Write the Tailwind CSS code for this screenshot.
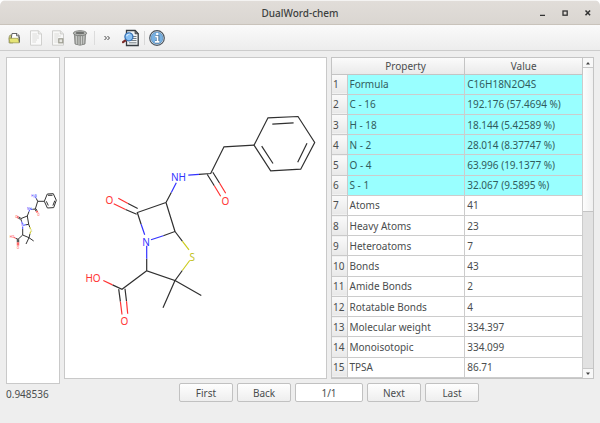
<!DOCTYPE html>
<html lang="en">
<head>
<meta charset="utf-8">
<title>DualWord-chem</title>
<script src="https://cdn.jsdelivr.net/npm/@tailwindcss/browser@4"></script>
</head>
<body class="bg-white">
<div class="flex h-screen flex-col overflow-hidden rounded-t-md bg-[#eeeeee] font-['Noto_Sans',sans-serif] text-[10px] leading-4 text-[#4a4d4e]">
  <header class="grid h-[25px] shrink-0 grid-cols-[1fr_auto_1fr] items-center border-t border-b border-t-[#f4f3f2] border-b-[#c9c3bb] bg-linear-to-b from-[#e1ddd9] to-[#dad6d1] px-1">
    <h1 class="col-start-2 font-medium text-[#3c3f40]">DualWord-chem</h1>
    <div class="flex justify-end gap-[7px]">
      <button aria-label="Minimize" class="size-4"><svg viewBox="0 0 16 16" class="size-4"><path d="M6 10.3h5" stroke="#333" stroke-width="1.3"/></svg></button>
      <button aria-label="Maximize" class="size-4"><svg viewBox="0 0 16 16" class="size-4"><rect x="6" y="6" width="4.2" height="4.2" fill="none" stroke="#333" stroke-width="1.3"/></svg></button>
      <button aria-label="Close" class="size-4"><svg viewBox="0 0 16 16" class="size-4"><path d="M5.5 5.5l4.6 4.8M10.1 5.5L5.5 10.3" stroke="#333" stroke-width="1.5"/></svg></button>
    </div>
  </header>

  <nav aria-label="Toolbar" class="flex h-[26px] shrink-0 items-center border-b border-[#cccccc] bg-linear-to-b from-[#fafafa] to-[#ededed] px-[3px]">
    <button aria-label="Open" class="flex w-[22px] justify-center">
      <svg viewBox="0 0 16 16" class="size-4"><path d="M3 7l1-2h3v8H3z" fill="#c8c878" stroke="#85855a" stroke-width=".6"/><path d="M6 3.5h5l2 2V10H5z" fill="#fff" stroke="#555" stroke-width=".9"/><path d="M10.5 3.5v2.3H13" fill="#ccc" stroke="#444" stroke-width=".7"/><path d="M3 8.3h9l1.2 4.5H4z" fill="#e5e477" stroke="#96954b" stroke-width=".7"/><path d="M12.3 7h1.2v5.5" fill="none" stroke="#666" stroke-width="1"/></svg>
    </button>
    <button aria-label="New document" class="flex w-[22px] justify-center">
      <svg viewBox="0 0 16 16" class="size-4"><path d="M2.5.8h8L13.5 4v11.2h-11z" fill="#fafafa" stroke="#ccccca" stroke-width=".9"/><path d="M10.3.8V4h3.2" fill="#e9e9e7" stroke="#c8c8c6" stroke-width=".7"/><path d="M4.3 4H9M4.3 6h6.5M4.3 8H11M4.3 10H9M4.3 12H8" stroke="#d4d4d2" stroke-width=".8"/></svg>
    </button>
    <button aria-label="Save document" class="flex w-[22px] justify-center">
      <svg viewBox="0 0 16 16" class="size-4"><path d="M2.5.8h8L13.5 4v11.2h-11z" fill="#f8f8f7" stroke="#c9c9c7" stroke-width=".9"/><path d="M10.3.8V4h3.2" fill="#e6e6e4" stroke="#c5c5c3" stroke-width=".7"/><path d="M4.3 4H9M4.3 6h6.5M4.3 8H8M4.3 10H8M4.3 12H8" stroke="#d4d4d2" stroke-width=".8"/><rect x="8.8" y="8.8" width="4" height="4" fill="#e8e8e3" stroke="#9b9b8f" stroke-width="1.2"/></svg>
    </button>
    <button aria-label="Delete" class="flex w-[22px] justify-center">
      <svg viewBox="0 0 16 16" class="size-4"><path d="M2.3 3.5h11.4L13 14q-5 2.4-10 0z" fill="#a6a8a5" stroke="#7c7e7b" stroke-width=".8"/><path d="M4.4 5.5l.4 8.5M7 6v8.8M9.5 6v8.5M11.8 5.5l-.5 8.3" stroke="#cfd1ce" stroke-width=".9"/><path d="M5.7 6v8M8.2 6v8.6M10.7 6v8" stroke="#858784" stroke-width=".7"/><ellipse cx="8" cy="3.2" rx="6.6" ry="2.5" fill="#b9bbb8" stroke="#777976" stroke-width=".9"/><ellipse cx="8" cy="3" rx="4.4" ry="1.2" fill="#6f716e"/></svg>
    </button>
    <span class="mx-[3px] h-3.5 w-px bg-[#dcdcdc]"></span>
    <button aria-label="More tools" class="flex w-[18px] justify-center">
      <svg viewBox="0 0 16 16" class="size-4"><path d="M5.5 6l2 2-2 2M8.5 6l2 2-2 2" fill="none" stroke="#444" stroke-width="1"/></svg>
    </button>
    <button aria-label="Find in document" class="ml-[3px] flex w-6 justify-center">
      <svg viewBox="0 0 18 18" class="size-[18px]"><path d="M4.5 1.5h8.7l3 3.2v11.8H4.5z" fill="#f1f4f6" stroke="#363c42" stroke-width="1.3"/><path d="M13 1.5v3.3h3.2z" fill="#78818a" stroke="#333" stroke-width=".7"/><path d="M10.5 7.5h4M10 9.5h4.5M8 11.5h6.5M7 13.8h7.5" stroke="#777f85" stroke-width="1"/><path d="M1 13.2l3-2.2" stroke="#7b2a29" stroke-width="2.2" stroke-linecap="round"/><circle cx="6.9" cy="7.8" r="4" fill="#89c1f4" stroke="#3973b4" stroke-width="1.3"/><path d="M4.5 7.3q.8-2.3 3.2-2.3" fill="none" stroke="#d9edff" stroke-width="1.1"/></svg>
    </button>
    <span class="mr-1 ml-px h-3.5 w-px bg-[#d8d8d8]"></span>
    <button aria-label="About" class="flex w-4 justify-center">
      <svg viewBox="0 0 16 16" class="size-4"><circle cx="8" cy="8" r="7.3" fill="#e8eef2" stroke="#4a535c" stroke-width="1.2"/><circle cx="8" cy="8" r="5.9" fill="#78b1e2" stroke="#5288ba" stroke-width=".7"/><path d="M6.2 6.6H9v5.2M6 11.9h4.4" fill="none" stroke="#45698b" stroke-width="2.7"/><path d="M6.2 6.6H8.6v5.2M6 11.9h4.4" fill="none" stroke="#fff" stroke-width="1.6"/><circle cx="8.2" cy="3.9" r="1.2" fill="#fff"/></svg>
    </button>
  </nav>

  <main class="flex min-h-0 flex-1 gap-1 px-1.5 pt-1.5 pb-[21px]">
    <aside class="flex w-[54px] shrink-0 flex-col">
      <div class="min-h-0 flex-1 border border-[#c9c9c9] bg-white">
        <svg viewBox="7 58 52 325" class="size-full" role="img" aria-label="Molecule thumbnail">
          <g fill="none" stroke="#333" stroke-width="1">
            <path d="M44.3 201.3l3-7.3 6-.3 3 6.6-2.6 7.3-6.3.4z"/><path d="M46.3 201.3l2 4.2M48 195.3h4.5M54.8 200.6l-1.9 5"/>
            <path d="M44.3 201.3h-6.6l-2.4 7.7-3 .3M37.7 201.3l-1.5-3M29 211.5l-1.7 4.5-6.6 2.7 1 3M27.3 216l1.4 8.3-2.7.5M28.7 224.3l1.1 3M22.7 229v6l6.3 2.7 1-4M29 237.7l-3 6.3M29 237.7l4.7 3.3M22.7 235L18 239.3l-2.3-1M17.3 239.3v3M18.7 239.3v3M35 209.2l1 2M36 208.8l1 2M20.7 218l-2-1M20.3 219.2l-2-1"/>
          </g>
          <g fill="none" stroke-width="1">
            <path d="M36.2 198.3l-1-1.7M32.3 209.3h-1.8M29 211.5l.5-1.5M21.7 221.7l.7 2M23.5 225.3l2.5-.6M22.7 226.5V229" stroke="#4545ff"/>
            <path d="M36 211.2l1 1.6M37 210.8l1 1.6M18.7 217l-1.4-.7M18.3 218.2l-1.4-.7M15.7 238.3l-2-1M17.3 242.3v3.3M18.7 242.3v3.3" stroke="#ff4545"/>
            <path d="M29.8 227.3l.7 1.6M30 233.7l.6-2" stroke="#cccc33" stroke-width="1.2"/>
          </g>
          <g font-size="3" text-anchor="middle"><text x="34" y="196.5" fill="#33f">H₂N</text><text x="29.3" y="210" fill="#33f">NH</text><text x="22.5" y="226.3" fill="#33f">N</text><text x="31.3" y="231.5" fill="#bb0">S</text><text x="16.5" y="217.5" fill="#f33">O</text><text x="38.3" y="215.5" fill="#f33">O</text><text x="12" y="238" fill="#f33">HO</text><text x="18" y="249" fill="#f33">O</text></g>
        </svg>
      </div>
      <output class="mt-0.5 block">0.948536</output>
    </aside>

    <div class="flex min-w-0 flex-1 flex-col gap-1">
      <div class="flex min-h-0 flex-1 gap-1">
        <div class="min-w-0 flex-1 border border-[#c9c9c9] bg-white">
          <svg viewBox="65 58 261 319" class="size-full" role="img" aria-label="Molecule structure">
            <g fill="none" stroke="#303030" stroke-width="1.2">
              <path d="M254 144.7l14-27.4 30-1.3 16.7 26-14 26.7-30 1.6z"/>
              <path d="M272.3 123.7l21.3-1.4M307 142.7l-9.3 19M261.7 145.7l11.3 17.3"/>
              <path d="M254 144.7l-30 1.6-13.3 26.7-11.7.8M207.3 174l7 11.2M212.8 171.7l6.7 10.8"/>
              <path d="M171.3 192l-5.3 10 9 29-11.7 4.3M166 202l-28.7 10 3.8 11.7M175 231l7.3 9.7M146.7 258.3v12l28.3 9.7 7.3-10M175 280l-12 27.3M175 280l26.3 15M146.7 270.3L122 288.7l-9.5-4.3"/>
              <path d="M128 203l9.7 5M125.5 209l11.2 4.8M118.7 288.7l1.7 12.5M125 288.3l1.5 12.5"/>
            </g>
            <g fill="none" stroke="#3333ff" stroke-width="1.2"><path d="M188.3 174.7l10.7-.9M171.3 192l5-9.7M141.1 223.7l3.6 10.6M163.3 235.3l-12.3 4M146.7 258.3v-13"/></g>
            <g fill="none" stroke="#ff3333" stroke-width="1.2"><path d="M214.3 185.2l6.4 10.5M219.5 182.5l6.2 10.2M128 203l-9.7-5.3M125.5 209l-11.8-5.7M112.5 284.4l-9.2-4.4M120.4 301.2l1.6 12.8M126.5 300.8l1.2 12.5"/></g>
            <g fill="none" stroke="#cccc22" stroke-width="1.2"><path d="M182.3 240.7l6.7 8.6M182.3 270l7.4-10"/></g>
            <g font-size="10" text-anchor="middle"><text x="178.5" y="180.5" fill="#3333ff">NH</text><text x="146" y="245.5" fill="#3333ff">N</text><text x="192.3" y="260.7" fill="#c2c222">S</text><g fill="#ff3333"><text x="109.3" y="203">O</text><text x="225.5" y="204">O</text><text x="93" y="281.5">HO</text><text x="124.3" y="324">O</text></g></g>
          </svg>
        </div>

        <div class="grid min-w-0 flex-1 grid-cols-[minmax(0,1fr)_10px] border border-[#c4c4c4] bg-white">
          <table class="h-full w-full table-fixed border-collapse [&_tbody_th]:border-r [&_tbody_th]:border-b [&_tbody_th]:border-[#cacaca] [&_tbody_th]:bg-linear-to-b [&_tbody_th]:from-[#fafafa] [&_tbody_th]:to-[#e8e8e8] [&_tbody_th]:p-0 [&_tbody_th]:pl-px [&_tbody_th]:text-left [&_tbody_th]:font-normal [&_td]:border-r [&_td]:border-b [&_td]:border-[#cccccc] [&_td]:p-0 [&_td]:pl-0.5 [&_tr]:leading-3">
            <colgroup><col class="w-[15px]"><col><col></colgroup>
            <thead><tr class="h-4 bg-linear-to-b from-[#fbfbfb] to-[#eaeaea] [&_th]:border-b [&_th]:border-[#c4c4c4] [&_th]:p-0 [&_th]:font-normal"><th aria-label="Row"></th><th scope="col" class="border-r">Property</th><th scope="col" class="border-r">Value</th></tr></thead>
            <tbody class="[&>tr:nth-child(-n+6)>td]:bg-[#99ffff] [&>tr:nth-child(-n+6)>td]:text-[#315c5d]">
              <tr><th scope="row">1</th><td>Formula</td><td>C16H18N2O4S</td></tr>
              <tr><th scope="row">2</th><td>C - 16</td><td>192.176 (57.4694 %)</td></tr>
              <tr><th scope="row">3</th><td>H - 18</td><td>18.144 (5.42589 %)</td></tr>
              <tr><th scope="row">4</th><td>N - 2</td><td>28.014 (8.37747 %)</td></tr>
              <tr><th scope="row">5</th><td>O - 4</td><td>63.996 (19.1377 %)</td></tr>
              <tr><th scope="row">6</th><td>S - 1</td><td>32.067 (9.5895 %)</td></tr>
              <tr><th scope="row">7</th><td>Atoms</td><td>41</td></tr>
              <tr><th scope="row">8</th><td>Heavy Atoms</td><td>23</td></tr>
              <tr><th scope="row">9</th><td>Heteroatoms</td><td>7</td></tr>
              <tr><th scope="row">10</th><td>Bonds</td><td>43</td></tr>
              <tr><th scope="row">11</th><td>Amide Bonds</td><td>2</td></tr>
              <tr><th scope="row">12</th><td>Rotatable Bonds</td><td>4</td></tr>
              <tr><th scope="row">13</th><td>Molecular weight</td><td>334.397</td></tr>
              <tr><th scope="row">14</th><td>Monoisotopic</td><td>334.099</td></tr>
              <tr><th scope="row">15</th><td>TPSA</td><td>86.71</td></tr>
            </tbody>
          </table>
          <div class="flex flex-col bg-[#e2e2e2]">
            <button aria-label="Scroll up" class="flex h-2.5 items-center justify-center border-b border-[#c8c8c8] bg-[#f8f8f8]"><svg viewBox="0 0 6 4" class="h-1 w-1.5"><path d="M1 3.5L3 1l2 2.5z" fill="#444"/></svg></button>
            <div class="min-h-0 flex-1"><div class="h-[48%] border-b border-[#c4c4c4] bg-linear-to-r from-[#fdfdfd] to-[#f0f0f0]"></div></div>
            <button aria-label="Scroll down" class="flex h-2.5 items-center justify-center border-t border-[#c8c8c8] bg-[#f8f8f8]"><svg viewBox="0 0 6 4" class="h-1 w-1.5"><path d="M1 .5L3 3l2-2.5z" fill="#444"/></svg></button>
          </div>
        </div>
      </div>

      <div class="flex h-[19px] shrink-0 justify-center gap-1 [&_button]:w-[54px] [&_button]:rounded-xs [&_button]:border [&_button]:border-[#c1c1c1] [&_button]:bg-linear-to-b [&_button]:from-[#fefefe] [&_button]:to-[#eeeeee]">
        <button>First</button>
        <button>Back</button>
        <input aria-label="Record" value="1/1" class="w-[68px] rounded-xs border border-[#c1c1c1] bg-white text-center">
        <button>Next</button>
        <button>Last</button>
      </div>
    </div>
  </main>
</div>
</body>
</html>
